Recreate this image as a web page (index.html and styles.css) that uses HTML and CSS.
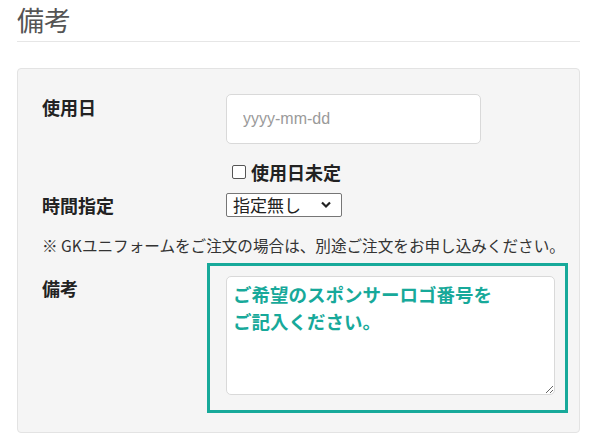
FILE: index.html
```html
<!DOCTYPE html>
<html lang="ja">
<head>
<meta charset="utf-8">
<link rel="stylesheet" href="styles.css">
</head>
<body>
<div class="page">
  <h2 class="title">備考</h2>
  <div class="panel">
    <div class="row row-date">
      <div class="label">使用日</div>
      <div class="control">
        <input class="date-input" type="text" placeholder="yyyy-mm-dd">
      </div>
    </div>
    <div class="row row-check">
      <div class="label"></div>
      <label class="check"><input type="checkbox" class="box"><span>使用日未定</span></label>
    </div>
    <div class="row row-time">
      <div class="label">時間指定</div>
      <div class="select">
        <span>指定無し</span>
        <svg class="chev" width="12" height="8" viewBox="0 0 12 8"><path d="M2 1.5 L6 5.5 L10 1.5" fill="none" stroke="#222" stroke-width="2.2"/></svg>
      </div>
    </div>
    <p class="note">※ GKユニフォームをご注文の場合は、別途ご注文をお申し込みください。</p>
    <div class="row row-memo">
      <div class="label">備考</div>
      <textarea class="memo">ご希望のスポンサーロゴ番号を
ご記入ください。</textarea>
    </div>
    <div class="highlight"></div>
  </div>
</div>
</body>
</html>
```
FILE: styles.css
```css
* { box-sizing: border-box; }
html, body { margin: 0; padding: 0; background: #fff; }
body {
  font-family: "Noto Sans CJK JP", "Noto Sans", sans-serif;
  color: #333;
  width: 590px;
  height: 443px;
  overflow: hidden;
}
.page {
  padding: 5px 10px 0 17px;
}
.title {
  margin: 0;
  font-size: 27px;
  font-weight: normal;
  line-height: 30px;
  color: #555;
  padding-bottom: 6px;
  border-bottom: 1px solid #e6e6e6;
}
.panel {
  position: relative;
  margin-top: 26px;
  width: 563px;
  height: 365px;
  background: #f5f5f5;
  border: 1px solid #e3e3e3;
  border-radius: 4px;
  padding: 25px 0 0 24px;
}
.row {
  display: flex;
  align-items: flex-start;
}
.label {
  width: 184px;
  flex: none;
  font-size: 18px;
  font-weight: bold;
  line-height: 20px;
  color: #222;
}
.row-date .label { margin-top: 3px; }
.date-input {
  width: 255px;
  height: 50px;
  border: 1px solid #d9d9d9;
  border-radius: 5px;
  background: #fff;
  padding: 0 16px;
  font-family: "Liberation Sans", Arial, sans-serif;
  font-size: 16px;
  color: #333;
  outline: none;
}
.date-input::placeholder { color: #9a9a9a; }
.row-check { margin-top: 18px; }
.check {
  display: flex;
  align-items: center;
  gap: 5px;
  margin-left: 6px;
  font-size: 18px;
  font-weight: bold;
  line-height: 20px;
  color: #222;
}
.box {
  appearance: none;
  -webkit-appearance: none;
  flex: none;
  width: 14px;
  height: 14px;
  margin: 0;
  border: 1.5px solid #555;
  border-radius: 2px;
  background: #fff;
}
.row-time { margin-top: 11px; align-items: center; }
.select {
  width: 116px;
  height: 24px;
  display: flex;
  align-items: center;
  justify-content: space-between;
  padding: 0 9px 0 6px;
  background: #fff;
  border: 1px solid #767676;
  border-radius: 2px;
  font-size: 17px;
  color: #222;
  line-height: 20px;
}
.chev { display: block; }
.note {
  margin: 18px 0 0 0;
  font-size: 15.6px;
  line-height: 20px;
  color: #333;
}
.row-memo { margin-top: 21px; }
.row-memo .label { margin-top: 2px; }
.memo {
  width: 329px;
  height: 119px;
  border: 1px solid #d9d9d9;
  border-radius: 5px;
  background: #fff;
  padding: 4px 6px;
  font-family: "Noto Sans CJK JP", sans-serif;
  font-size: 18.5px;
  font-weight: bold;
  line-height: 27px;
  color: #17a99a;
  resize: both;
  outline: none;
}
.highlight {
  position: absolute;
  left: 189px;
  top: 194px;
  width: 361px;
  height: 150px;
  border: 3px solid #17a99a;
  pointer-events: none;
}
```
